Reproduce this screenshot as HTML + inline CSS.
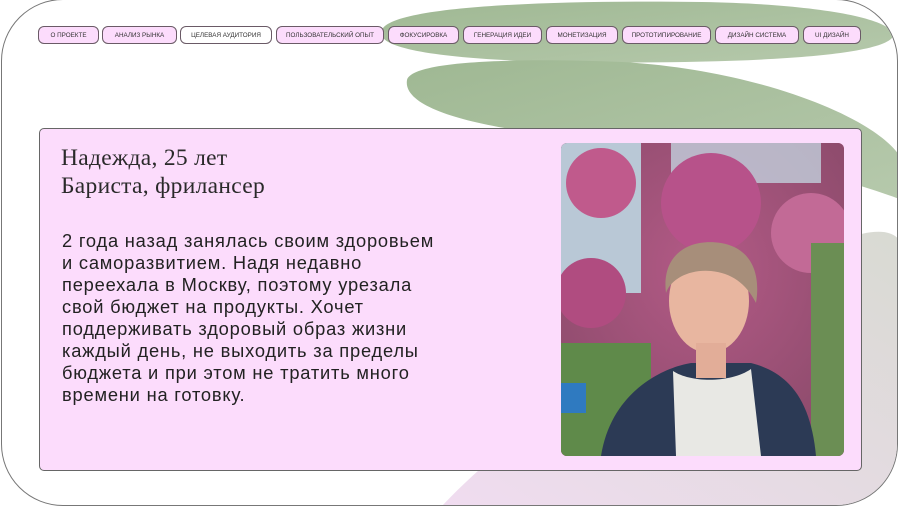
<!DOCTYPE html>
<html><head><meta charset="utf-8"><style>
html,body{margin:0;padding:0;width:900px;height:506px;overflow:hidden;background:#fff}
.frame{position:absolute;left:1px;top:-1px;width:895px;height:505px;border:1px solid #777;border-radius:62px;overflow:hidden;background:#fff}
svg.bg{position:absolute;left:0;top:0}
.tab{position:absolute;top:26px;height:18px;border:1px solid #6a5a66;border-radius:6px;background:#fcdcfc;font:400 6.3px "Liberation Sans",sans-serif;color:#333;display:flex;align-items:center;justify-content:center;box-sizing:border-box}
.card{position:absolute;left:39px;top:128px;width:823px;height:343px;box-sizing:border-box;border:1px solid #666;border-radius:5px;background:#fcdcfc}
h1{position:absolute;left:21px;top:15px;margin:0;font:400 23.5px/28px "Liberation Serif","Noto Serif CJK SC",serif;color:#2a2a2a;letter-spacing:.3px;white-space:nowrap}
p{position:absolute;left:22px;top:101px;margin:0;width:400px;font:400 18.3px/22px "Liberation Sans",sans-serif;color:#222;letter-spacing:.8px}
.photo{position:absolute;left:521px;top:14px;width:283px;height:313px;border-radius:6px;overflow:hidden;background:#c7568a}
</style></head><body>
<div class="frame">
<svg class="bg" width="900" height="506">
<defs><linearGradient id="g" x1="0" y1="0" x2="1" y2="1"><stop offset="0" stop-color="#9fb893"/><stop offset="1" stop-color="#b6c9ac"/></linearGradient>
<linearGradient id="p" x1="0" y1="1" x2="1" y2="0"><stop offset="0" stop-color="#f0dcf0"/><stop offset="1" stop-color="#d8dad2"/></linearGradient></defs>
<path d="M380 30 C390 5 560 0 700 2 C820 4 900 20 890 38 C870 60 700 64 560 62 C450 60 370 50 380 30Z" fill="url(#g)"/>
<path d="M405 80 C410 60 520 58 620 62 C760 70 880 120 900 160 L900 200 C820 170 720 150 600 140 C480 130 400 110 405 80Z" fill="url(#g)"/>
<path d="M440 506 C520 420 700 300 840 240 C880 225 905 230 900 260 L900 506Z" fill="url(#p)"/>
</svg>
</div>
<div class="tab" style="left:38px;width:61px">О ПРОЕКТЕ</div>
<div class="tab" style="left:102px;width:75px">АНАЛИЗ РЫНКА</div>
<div class="tab" style="left:180px;width:92px;background:#fff">ЦЕЛЕВАЯ АУДИТОРИЯ</div>
<div class="tab" style="left:276px;width:108px">ПОЛЬЗОВАТЕЛЬСКИЙ ОПЫТ</div>
<div class="tab" style="left:388px;width:71px">ФОКУСИРОВКА</div>
<div class="tab" style="left:463px;width:79px">ГЕНЕРАЦИЯ ИДЕИ</div>
<div class="tab" style="left:546px;width:72px">МОНЕТИЗАЦИЯ</div>
<div class="tab" style="left:622px;width:89px">ПРОТОТИПИРОВАНИЕ</div>
<div class="tab" style="left:715px;width:84px">ДИЗАЙН СИСТЕМА</div>
<div class="tab" style="left:803px;width:58px">UI ДИЗАЙН</div>
<div class="card">
<h1>Надежда, 25 лет<br>Бариста, фрилансер</h1>
<p>2 года назад занялась своим здоровьем<br>и саморазвитием. Надя недавно<br>переехала в Москву, поэтому урезала<br>свой бюджет на продукты. Хочет<br>поддерживать здоровый образ жизни<br>каждый день, не выходить за пределы<br>бюджета и при этом не тратить много<br>времени на готовку.</p>
<div class="photo">
<svg width="283" height="313">
<defs><radialGradient id="f" cx=".5" cy=".4" r=".7"><stop offset="0" stop-color="#b35a86"/><stop offset="1" stop-color="#8a4a6a"/></radialGradient></defs>
<rect width="283" height="313" fill="url(#f)"/>
<rect x="0" y="0" width="80" height="150" fill="#b9c8d6"/>
<rect x="110" y="0" width="150" height="40" fill="#c2cfdc" opacity=".8"/>
<circle cx="40" cy="40" r="35" fill="#c05a8c"/>
<circle cx="150" cy="60" r="50" fill="#b7528a"/>
<circle cx="250" cy="90" r="40" fill="#c26a96"/>
<circle cx="30" cy="150" r="35" fill="#b04c80"/>
<rect x="0" y="200" width="90" height="113" fill="#5f8a4a"/>
<rect x="0" y="240" width="25" height="30" fill="#2f7ac0"/>
<rect x="250" y="100" width="33" height="213" fill="#6b8e54"/>
<path d="M40 313 C50 250 100 225 130 220 L190 220 C230 230 250 260 255 313Z" fill="#2c3a55"/>
<path d="M112 228 C130 240 170 240 190 226 L200 313 L115 313Z" fill="#e8e8e4"/>
<ellipse cx="148" cy="158" rx="40" ry="52" fill="#e8b6a0"/>
<path d="M105 150 C100 110 130 95 160 100 C190 105 200 130 195 160 C185 140 170 130 150 128 C130 126 110 135 105 150Z" fill="#a78e7a"/>
<rect x="135" y="200" width="30" height="35" fill="#e2ad98"/>
</svg>
</div>
</div>
</body></html>
